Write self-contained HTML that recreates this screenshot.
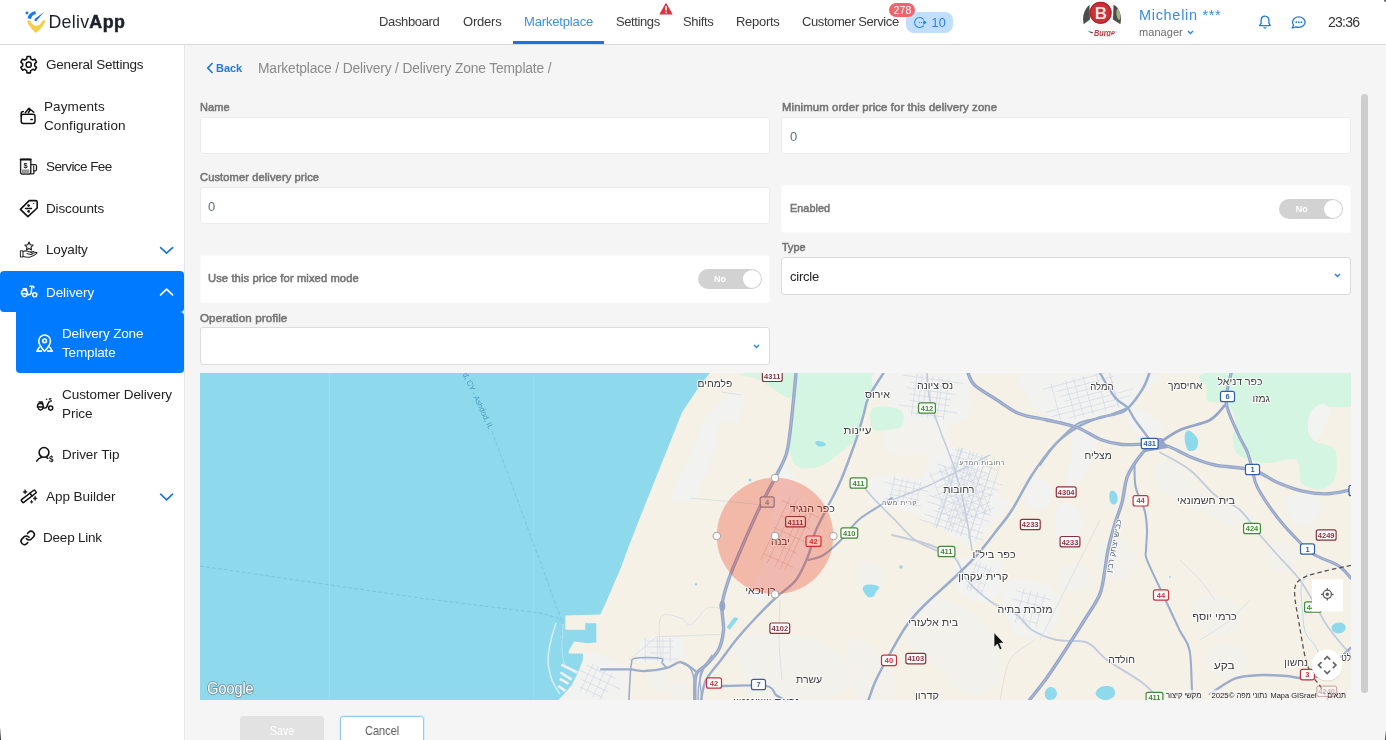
<!DOCTYPE html>
<html lang="en">
<head>
<meta charset="utf-8">
<title>DelivApp - Delivery Zone Template</title>
<style>
*{box-sizing:border-box;margin:0;padding:0}
html,body{width:1386px;height:740px;overflow:hidden;background:#f5f5f5;font-family:"Liberation Sans","Noto Sans CJK JP",sans-serif;color:#333}
.abs{position:absolute}
#header,#sideitems,#content{will-change:transform;-webkit-font-smoothing:antialiased}
#header{position:absolute;left:0;top:0;width:1386px;height:45px;background:#fff;border-bottom:1px solid #d9d9d9}
#sidebar{position:absolute;left:0;top:45px;width:185px;height:695px;background:#fff;border-right:1px solid #e6e6e6}
.nav{position:absolute;top:14px;font-size:13px;line-height:16px;color:#3a3a3a;white-space:nowrap;letter-spacing:.45px}
.nav.act{color:#3d8fe0}
.t{position:absolute;white-space:nowrap;transform-origin:0 50%}
.si{position:absolute;font-size:13.5px;line-height:19px;color:#222;white-space:nowrap;letter-spacing:.1px}
.lbl{transform-origin:0 50%;position:absolute;font-size:11.8px;line-height:14px;font-weight:normal;-webkit-text-stroke:.6px #767676;color:#767676;white-space:nowrap;letter-spacing:.1px}
.inp{position:absolute;background:#fff;border:1px solid #ececec;border-radius:3px}
.sel{position:absolute;background:#fff;border:1px solid #dcdcdc;border-radius:3px}
.val{position:absolute;font-size:13px;line-height:16px;color:#5f6f8a;white-space:nowrap}
.tog{position:absolute;width:64px;height:20px;border-radius:10px;background:#d2d2d2}
.tog i{position:absolute;right:1px;top:1px;width:18px;height:18px;border-radius:50%;background:#fff}
.tog span{position:absolute;left:16.5px;top:4.4px;font-size:9px;line-height:12px;font-weight:bold;color:#fff;font-style:normal}
svg{position:absolute;overflow:visible}
/*LS*/
#n1{letter-spacing:-0.36px!important}
#n2{letter-spacing:-0.21px!important}
#n3{letter-spacing:-0.16px!important}
#n4{letter-spacing:-0.40px!important}
#n5{letter-spacing:-0.36px!important}
#n6{letter-spacing:-0.30px!important}
#n7{letter-spacing:-0.41px!important}
#s1{letter-spacing:-0.20px!important}
#s2{letter-spacing:0.10px!important}
#s3{letter-spacing:-0.58px!important}
#s4{letter-spacing:-0.14px!important}
#s5{letter-spacing:-0.16px!important}
#s6{letter-spacing:-0.08px!important}
#s7{letter-spacing:-0.15px!important}
#s8{letter-spacing:-0.06px!important}
#s9{letter-spacing:-0.03px!important}
#s10{letter-spacing:-0.04px!important}
#s11{letter-spacing:-0.21px!important}
#u1{letter-spacing:0.69px!important}
#u2{letter-spacing:0.05px!important}
#u3{letter-spacing:-0.76px!important}
#c1{transform:scaleX(0.929)}
#c2{letter-spacing:-0.14px!important}
#l1{transform:scaleX(0.932)}
#l2{transform:scaleX(0.944)}
#l3{transform:scaleX(0.949)}
#l4{transform:scaleX(0.983)}
#l5{transform:scaleX(0.964)}
#l6{transform:scaleX(0.914)}
#l7{transform:scaleX(0.912)}
#v3{letter-spacing:-0.23px!important}
#b1{transform:scaleX(0.864)}
#b2{transform:scaleX(0.901)}
#lg1{letter-spacing:0.28px!important}
/*ENDLS*/
</style>
</head>
<body>
<!-- HEADER -->
<div id="header">
  <!-- logo -->
  <svg style="left:0;top:0" width="60" height="44" viewBox="0 0 60 44">
    <path d="M27.2 20 C27.5 25 32 29.6 36.1 33 C40.2 29.6 45 25 45.3 19.6 L41.6 21.4 C40.9 24 38.7 25.7 36.1 25.7 C33.4 25.7 31 23.7 30.6 21 Z" fill="#f6cf4a"/>
    <path d="M27.6 18.2 C28.4 14.4 31.4 11.7 35.3 11.2 L36 14 C33.5 14.4 31.6 16.2 31 18.9 Z" fill="#1877f2"/>
    <circle cx="27" cy="13" r="1.45" fill="#1877f2"/>
    <path d="M43.9 12.1 L36.4 20.9 Q35.2 21.8 34.5 20.6 Q34.2 19.7 35 18.8 Z" fill="#1877f2"/>
  </svg>
  <div class="t" id="lg1" style="left:48.4px;top:10.8px;font-size:17.8px;line-height:22px;color:#1c212c;letter-spacing:.2px">Deliv<b style="letter-spacing:.5px;-webkit-text-stroke:.55px #1c212c">App</b></div>

  <div class="nav" id="n1" style="left:379px">Dashboard</div>
  <div class="nav" id="n2" style="left:463px">Orders</div>
  <div class="nav act" id="n3" style="left:524px">Marketplace</div>
  <div class="abs" style="left:513px;top:41px;width:91px;height:3px;background:#1a73e0"></div>
  <div class="nav" id="n4" style="left:616px">Settings</div>
  <svg style="left:659px;top:2px" width="14" height="13" viewBox="0 0 14 13"><path d="M7 0.6 L13.4 12 Q13.6 12.6 13 12.6 L1 12.6 Q0.4 12.6 0.6 12 Z" fill="#d9343f"/><rect x="6.3" y="4" width="1.5" height="4.6" rx=".6" fill="#fff"/><circle cx="7.05" cy="10.4" r=".9" fill="#fff"/></svg>
  <div class="nav" id="n5" style="left:683px">Shifts</div>
  <div class="nav" id="n6" style="left:736px">Reports</div>
  <div class="nav" id="n7" style="left:802px">Customer Service</div>
  <!-- blue pill -->
  <div class="abs" style="left:906px;top:11.6px;width:47px;height:21px;border-radius:8px;background:#bfdffd"></div>
  <svg style="left:913px;top:15.5px" width="15" height="13" viewBox="0 0 15 13" fill="none" stroke="#2f86e6" stroke-width="1.05" stroke-linecap="round" stroke-linejoin="round"><path d="M10.4 3.2 A5 5 0 1 0 10.4 9.8"/><path d="M6.2 6.5 H10.5" stroke-dasharray=".4 1.7"/><path d="M10.8 4.9 L12.9 6.5 L10.8 8.1Z" fill="#2f86e6"/></svg>
  <div class="t" id="n8" style="left:931.4px;top:14.6px;font-size:12.6px;line-height:16px;color:#2f7fe0;letter-spacing:.3px">10</div>
  <!-- red badge -->
  <div class="abs" style="left:889.3px;top:3.4px;width:25.6px;height:13.4px;border-radius:7px;background:#f0656c"></div>
  <div class="t" id="n9" style="left:893.4px;top:4.2px;font-size:10.5px;line-height:12px;color:#fff;letter-spacing:.2px">278</div>

  <!-- avatar -->
  <svg style="left:1083px;top:0" width="38" height="38" viewBox="0 0 38 38">
    <defs><clipPath id="av"><circle cx="19" cy="19" r="19"/></clipPath></defs>
    <g clip-path="url(#av)">
      <rect width="38" height="38" fill="#fbfbfb"/>
      <path d="M6.5 5 L-2 8 L-2 25 L0.2 24.5 L7 19.5Z" fill="#4d4b4b"/>
      <path d="M30.5 5 L40 8 L40 25 L37.8 24.5 L30 19.5Z" fill="#4d4b4b"/>
      <ellipse cx="35.4" cy="14.4" rx="1.9" ry="5.6" transform="rotate(-8 35.4 14.4)" fill="#9db67d"/>
      <circle cx="17.6" cy="12.8" r="10.9" fill="#cf2f37"/>
      <circle cx="17.6" cy="12.8" r="10.4" fill="none" stroke="#a72229" stroke-width="1.1"/>
      <text x="18" y="19" text-anchor="middle" font-family="Liberation Sans,sans-serif" font-weight="bold" font-size="17" fill="#fbe3dc">B</text>
      <text x="21.6" y="35.6" text-anchor="middle" font-family="Liberation Sans,sans-serif" font-weight="bold" font-style="italic" font-size="9" fill="#c63a45" textLength="21" lengthAdjust="spacingAndGlyphs">Burge</text>
      <path d="M4.6 31 l4.2 2.6 l1.6 -1.4Z M38 30.6 l-4.6 2.6 l-1.2 -1.4Z" fill="#6b4a4a"/>
    </g>
  </svg>
  <div class="t" id="u1" style="left:1139px;top:5.7px;font-size:14.5px;line-height:18px;color:#3a8be2;letter-spacing:.9px">Michelin ***</div>
  <div class="t" id="u2" style="left:1139px;top:24.6px;font-size:11px;line-height:14px;color:#6b6b6b;letter-spacing:.75px">manager</div>
  <svg style="left:1187px;top:30px" width="7" height="5" viewBox="0 0 7 5" fill="none" stroke="#2f7fe0" stroke-width="1.4"><path d="M1 1 L3.5 3.6 L6 1"/></svg>
  <!-- bell -->
  <svg style="left:1258px;top:15px" width="14" height="15" viewBox="0 0 14 15" fill="none" stroke="#1f78e6" stroke-width="1.3" stroke-linejoin="round" stroke-linecap="round"><path d="M7 1.2 C4.4 1.2 3.1 3.2 3.1 5.4 V8.2 L1.7 10.6 H12.3 L10.9 8.2 V5.4 C10.9 3.2 9.6 1.2 7 1.2Z"/><path d="M6 12.6 Q7 13.6 8 12.6"/></svg>
  <!-- chat -->
  <svg style="left:1291px;top:16px" width="15" height="13" viewBox="0 0 15 13" fill="none" stroke="#1f78e6" stroke-width="1.3" stroke-linejoin="round"><path d="M7.8 0.9 C11.3 0.9 14.1 3.2 14.1 6.1 C14.1 9 11.3 11.3 7.8 11.3 C6.8 11.3 5.9 11.1 5.1 10.8 L1.2 12 L2.6 9.2 C1.9 8.3 1.5 7.2 1.5 6.1 C1.5 3.2 4.3 0.9 7.8 0.9Z"/><g fill="#1f78e6" stroke="none"><circle cx="5.3" cy="6.2" r=".9"/><circle cx="7.9" cy="6.2" r=".9"/><circle cx="10.5" cy="6.2" r=".9"/></g></svg>
  <div class="t" id="u3" style="left:1328px;top:13.6px;font-size:14px;line-height:17px;color:#333;letter-spacing:.2px">23:36</div>
</div>

<!-- SIDEBAR -->
<div id="sidebar"></div>
<div id="sideitems">
  <div class="abs" style="left:0;top:271px;width:184px;height:41px;background:#007bff;border-radius:4px 4px 4px 4px"></div>
  <div class="abs" style="left:16.4px;top:312px;width:167.6px;height:61px;background:#007bff;border-radius:0 4px 4px 4px"></div><div class="abs" style="left:16.4px;top:306px;width:120px;height:10px;background:#007bff"></div>
  <div class="si" id="s1" style="left:46px;top:55px">General Settings</div>
  <div class="si" id="s2" style="left:44px;top:97px">Payments<br>Configuration</div>
  <div class="si" id="s3" style="left:46px;top:157px">Service Fee</div>
  <div class="si" id="s4" style="left:46px;top:199px">Discounts</div>
  <div class="si" id="s5" style="left:46px;top:240px">Loyalty</div>
  <div class="si" id="s6" style="left:46px;top:282.7px;color:#fff">Delivery</div>
  <div class="si" id="s7" style="left:62px;top:324px;color:#fff">Delivery Zone<br>Template</div>
  <div class="si" id="s8" style="left:62px;top:385px">Customer Delivery<br>Price</div>
  <div class="si" id="s9" style="left:62px;top:445px">Driver Tip</div>
  <div class="si" id="s10" style="left:46px;top:487px">App Builder</div>
  <div class="si" id="s11" style="left:43px;top:528px">Deep Link</div>
  <!--ICONS-->
<svg style="left:0;top:0" width="186" height="740" viewBox="0 0 186 740" fill="none" stroke="#111" stroke-width="1.5" stroke-linecap="round" stroke-linejoin="round">
<path d="M26.69 58.83 L27.05 56.57 L30.35 56.57 L30.71 58.83 L32.78 60.03 L34.92 59.20 L36.57 62.06 L34.78 63.51 L34.78 65.89 L36.57 67.34 L34.92 70.20 L32.78 69.37 L30.71 70.57 L30.35 72.83 L27.05 72.83 L26.69 70.57 L24.62 69.37 L22.48 70.20 L20.83 67.34 L22.62 65.89 L22.62 63.51 L20.83 62.06 L22.48 59.20 L24.62 60.03Z" stroke-width="1.6"/><circle cx="28.7" cy="64.7" r="2.6" stroke-width="1.5"/>
<rect x="21.2" y="114.3" width="13.8" height="9.1" rx="2.2"/>
<path d="M21.2 116 V113.6 Q21.2 111.7 23.3 111.6"/><path d="M25.4 112.5 L29 108.2 L33.8 112.3"/><path d="M30.3 109.8 L28.4 112.5"/>
<path d="M31 119.5 h1.2" stroke-width="1.7"/>
<rect x="20.6" y="159.4" width="10.2" height="14.6" rx="1.4" stroke="#222" stroke-width="1.4"/>
<rect x="22" y="169.4" width="7.4" height="4" fill="#9a9a9a" stroke="none"/>
<path d="M20.6 159.6 h10.2" stroke-width="2"/>
<path d="M30.9 164.7 h4.2 q1.4 0 1.4 1.4 v3.4 q0 1.4 -1.4 1.4 h-1.2 v2 q0 1 -1 1 h-2" stroke="#222" stroke-width="1.3"/><path d="M33.7 166 v4.6" stroke="#222" stroke-width="1.1"/>
<text x="25.6" y="167.8" text-anchor="middle" font-family="Liberation Sans,sans-serif" font-size="7.5" font-weight="bold" fill="#111" stroke="none">$</text>
<path d="M20.4 209.4 L29.2 200.6 H35.6 Q37.2 200.6 37.2 202.2 V208 L27.9 216.6 Z" stroke-width="1.6"/>
<circle cx="28.6" cy="205.6" r="1.3" fill="#111" stroke="none"/><circle cx="28.6" cy="211.4" r="1.3" fill="#111" stroke="none"/><path d="M25.4 208.5 H31.6" stroke-width="1.3"/><circle cx="33.7" cy="203.6" r=".6" fill="#111" stroke="none"/>
<path d="M29.00 242.10 L30.23 244.70 L33.09 245.07 L31.00 247.05 L31.53 249.88 L29.00 248.50 L26.47 249.88 L27.00 247.05 L24.91 245.07 L27.77 244.70Z" stroke="#222" stroke-width="1.15"/>
<g stroke="#2a2a2a" stroke-width="1.05"><rect x="20.4" y="250.8" width="2.6" height="6.2" rx=".5"/><path d="M23 251.6 Q25.5 250.4 27.5 251.2 L31.5 252.6 Q32.8 253.2 32 254.2 Q31.5 254.8 30.2 254.5 L27 253.6"/><path d="M23 256.3 Q26 257.6 29.5 257.2 Q33.5 256.3 36.8 253.4 Q37.3 252.4 36 252.3 L32.3 253.6"/><path d="M30.5 252 L34 251.4"/></g>
<g transform="translate(0 0)" stroke="#fff" stroke-width="1.45"><circle cx="34.7" cy="294.8" r="2.05"/><path d="M30 286.3 H33 Q33.9 286.4 33.9 287.7"/><path d="M31.9 286.5 L31.3 292"/><path d="M31.4 291.8 Q31.3 294.8 28.6 294.8 H27.4"/><path d="M21.5 293.7 Q21.3 290.2 24.4 290 Q27.1 290 27.5 293.7"/><path d="M21.5 293.7 H27.5"/><path d="M23.1 288.6 H26.2 L26.7 290.4"/><path d="M22.3 294.9 A2.3 2.3 0 0 0 26.8 294.9"/></g>
<g transform="translate(16.0 113.3)" stroke="#111" stroke-width="1.45"><circle cx="34.7" cy="294.8" r="2.05"/><path d="M33.1 288.6 L31.9 290.6 L31.5 292.2"/><path d="M31.4 291.8 Q31.3 294.8 28.6 294.8 H27.4"/><path d="M21.5 293.7 Q21.3 290.2 24.4 290 Q27.1 290 27.5 293.7"/><path d="M21.5 293.7 H27.5"/><path d="M23.1 288.6 H26.2 L26.7 290.4"/><path d="M22.3 294.9 A2.3 2.3 0 0 0 26.8 294.9"/><circle cx="30.6" cy="286" r=".8" fill="#111" stroke="none"/><text x="34.2" y="289.2" text-anchor="middle" font-family="Liberation Sans,sans-serif" font-size="6.2" font-weight="bold" fill="#111" stroke="none">$</text></g>
<g stroke="#fff" stroke-width="1.55"><path d="M44.6 351.2 C41.5 348 38.7 344.6 38.7 340.9 A5.9 5.9 0 0 1 50.5 340.9 C50.5 344.6 47.7 348 44.6 351.2Z"/><circle cx="44.6" cy="340.8" r="1.9"/><path d="M39.3 347.3 L36.8 351.1 H41.6"/><path d="M49.9 347.3 L52.4 351.1 H47.6"/></g>
<circle cx="44" cy="452.4" r="4.9" stroke-width="1.55"/><path d="M36.7 461.2 Q38.4 458.3 41.2 457.6 M46.8 457.6 L47.8 458.3" stroke-width="1.55"/>
<text x="51.4" y="462.2" text-anchor="middle" font-family="Liberation Sans,sans-serif" font-size="8.2" font-weight="bold" fill="#111" stroke="none">$</text>
<g transform="rotate(-38 28.7 496.3)" stroke-width="1.5"><rect x="20.2" y="494.6" width="17" height="3.5" rx=".8"/><path d="M31.6 494.6 v3.5"/></g>
<path d="M25.1 489.7 L25.716 491.284 L27.3 491.9 L25.716 492.51599999999996 L25.1 494.09999999999997 L24.484 492.51599999999996 L22.900000000000002 491.9 L24.484 491.284Z" fill="#111" stroke="#111" stroke-width=".5"/>
<path d="M35.1 496.2 L35.716 497.784 L37.300000000000004 498.4 L35.716 499.01599999999996 L35.1 500.59999999999997 L34.484 499.01599999999996 L32.9 498.4 L34.484 497.784Z" fill="#111" stroke="#111" stroke-width=".5"/>
<path d="M31.6 500.4 L32.02 501.47999999999996 L33.1 501.9 L32.02 502.32 L31.6 503.4 L31.18 502.32 L30.1 501.9 L31.18 501.47999999999996Z" fill="#111" stroke="#111" stroke-width=".5"/>
<g transform="translate(19.7 529.9) scale(.667)" stroke-width="2.3"><path d="M10 13a5 5 0 0 0 7.54.54l3-3a5 5 0 0 0-7.07-7.07l-1.72 1.71"/><path d="M14 11a5 5 0 0 0-7.54-.54l-3 3a5 5 0 0 0 7.07 7.07l1.71-1.71"/></g>
<path d="M160.6 247.6 L166.6 253.2 L172.6 247.6" stroke="#1a6fe0" stroke-width="1.6"/>
<path d="M160.6 494.2 L166.6 499.8 L172.6 494.2" stroke="#1a6fe0" stroke-width="1.6"/>
<path d="M160.6 294.8 L166.6 289.2 L172.6 294.8" stroke="#fff" stroke-width="1.7"/>
</svg>
<!--ENDICONS-->
</div>

<!-- CONTENT -->
<div id="content">
  <svg style="left:206.3px;top:62px" width="8" height="12" viewBox="0 0 8 12" fill="none" stroke="#1f78e6" stroke-width="1.7"><path d="M6.5 1 L1.8 6 L6.5 11"/></svg>
  <div class="t" id="c1" style="left:216px;top:60px;font-size:11.8px;line-height:16px;font-weight:bold;color:#1f78e6">Back</div>
  <div class="t" id="c2" style="left:258px;top:60px;font-size:13.8px;line-height:17px;color:#8a8a8a">Marketplace / Delivery / Delivery Zone Template /</div>

  <div class="lbl" id="l1" style="left:200px;top:100px">Name</div>
  <div class="inp" style="left:200px;top:117px;width:570px;height:37px"></div>
  <div class="lbl" id="l2" style="left:200px;top:170px">Customer delivery price</div>
  <div class="inp" style="left:200px;top:187px;width:570px;height:37px"></div>
  <div class="val" style="left:208px;top:198.7px">0</div>
  <div class="inp" style="left:200px;top:255px;width:570px;height:48px;border-color:#fafafa"></div>
  <div class="lbl" id="l3" style="left:208px;top:271px">Use this price for mixed mode</div>
  <div class="tog" style="left:697.6px;top:269px"><span>No</span><i></i></div>
  <div class="lbl" id="l4" style="left:200px;top:311px">Operation profile</div>
  <div class="sel" style="left:200px;top:327px;width:570px;height:38px"></div>
  <svg style="left:753px;top:344px" width="7" height="5" viewBox="0 0 7 5" fill="none" stroke="#2f7fe0" stroke-width="1.4"><path d="M1 1 L3.5 3.6 L6 1"/></svg>

  <div class="lbl" id="l5" style="left:782px;top:100px">Minimum order price for this delivery zone</div>
  <div class="inp" style="left:781px;top:117px;width:570px;height:37px"></div>
  <div class="val" style="left:790px;top:128.7px">0</div>
  <div class="inp" style="left:781px;top:185px;width:570px;height:48px;border-color:#fafafa"></div>
  <div class="lbl" id="l6" style="left:790px;top:201px">Enabled</div>
  <div class="tog" style="left:1279.3px;top:198.5px"><span>No</span><i></i></div>
  <div class="lbl" id="l7" style="left:782px;top:240px">Type</div>
  <div class="sel" style="left:781px;top:257px;width:570px;height:38px"></div>
  <div class="val" id="v3" style="left:790px;top:268.7px;color:#222">circle</div>
  <svg style="left:1334px;top:273px" width="7" height="5" viewBox="0 0 7 5" fill="none" stroke="#2f7fe0" stroke-width="1.4"><path d="M1 1 L3.5 3.6 L6 1"/></svg>

  <!-- scrollbar -->
  <div class="abs" style="left:1361px;top:94px;width:7px;height:599px;border-radius:4px;background:#cdcdcd"></div>

  <!-- buttons -->
  <div class="abs" style="left:240px;top:716px;width:84px;height:30px;border-radius:3px;background:#e2e2e2"></div>
  <div class="t" id="b1" style="left:269.5px;top:723px;font-size:12.2px;line-height:16px;color:#fff">Save</div>
  <div class="abs" style="left:340px;top:716px;width:84px;height:30px;border-radius:3px;background:#fff;border:1px solid #8fcdf5;box-shadow:0 0 0 1px #d8eefc"></div>
  <div class="t" id="b2" style="left:364.5px;top:723px;font-size:12.2px;line-height:16px;color:#5a5a5a">Cancel</div>

  <!--MAP-->
<svg id="map" style="left:200px;top:373px" width="1151" height="327" viewBox="200 373 1151 327">
<defs><clipPath id="mc"><rect x="200" y="373" width="1151" height="327"/></clipPath></defs>
<g clip-path="url(#mc)" font-family="Liberation Sans,DejaVu Sans,sans-serif">
<rect x="200" y="373" width="1151" height="327" fill="#f6f1e6"/>
<path d="M751.0 373.0 C779.9 371.4 855.8 368.6 884.0 373.0 C912.2 377.4 876.2 383.8 872.0 392.0 C867.8 400.2 868.3 400.5 866.0 408.0 C863.7 415.5 864.3 417.0 862.0 424.0 C859.7 431.0 859.7 432.4 856.0 438.0 C852.3 443.6 853.1 442.1 846.0 448.0 C838.9 453.9 833.7 458.8 825.5 463.5 C817.3 468.2 817.6 467.4 811.0 468.0 C804.4 468.6 801.8 469.0 797.0 466.0 C792.2 463.0 792.4 461.1 790.5 455.0 C788.6 448.9 788.6 448.2 789.0 440.0 C789.4 431.8 790.8 429.3 792.0 420.0 C793.2 410.7 795.4 405.4 794.0 400.0 C792.6 394.6 791.1 399.8 786.0 397.0 C780.9 394.2 778.1 392.0 772.0 388.0 C765.9 384.0 764.9 383.5 760.0 380.0 C755.1 376.5 722.1 374.6 751.0 373.0Z" fill="#d4f5e1"/>
<path d="M1209.0 373.0 C1230.7 370.8 1330.0 368.2 1351.4 373.0 C1372.8 377.8 1356.0 400.0 1351.4 405.1 C1346.8 410.2 1326.8 404.8 1320.6 406.9 C1314.4 409.0 1311.0 414.2 1310.0 419.2 C1309.0 424.2 1310.7 436.3 1313.6 440.3 C1316.5 444.3 1326.0 443.5 1329.4 445.6 C1332.8 447.7 1335.6 449.4 1336.4 454.4 C1337.2 459.4 1337.1 473.7 1334.7 479.0 C1332.3 484.3 1325.6 489.0 1320.6 489.5 C1315.6 490.0 1305.0 487.0 1301.3 482.5 C1297.6 478.0 1301.5 462.5 1296.0 459.6 C1290.5 456.7 1273.1 463.9 1264.4 463.1 C1255.7 462.3 1242.8 458.3 1238.0 454.4 C1233.2 450.5 1233.0 441.6 1232.7 436.8 C1232.4 432.0 1237.0 427.7 1236.2 422.7 C1235.4 417.7 1231.7 406.6 1227.5 403.4 C1223.3 400.2 1211.1 404.0 1208.0 401.6 C1204.9 399.2 1206.8 391.9 1207.0 387.6 C1207.2 383.3 1187.3 375.2 1209.0 373.0Z" fill="#d4f5e1"/>
<path d="M1311.0 412.0 C1313.8 408.0 1318.2 404.4 1322.0 404.0 C1325.8 403.6 1329.2 406.0 1330.0 410.0 C1330.8 414.0 1328.4 418.0 1326.0 424.0 C1323.6 430.0 1321.2 437.6 1318.0 440.0 C1314.8 442.4 1312.0 439.2 1310.0 436.0 C1308.0 432.8 1307.8 428.8 1308.0 424.0 C1308.2 419.2 1308.2 416.0 1311.0 412.0Z" fill="#f3f3f1"/>
<path d="M721.1 402.5 C723.1 400.6 727.1 395.1 729.8 393.8 C732.5 392.5 742.5 390.5 744.1 391.4 C745.7 392.3 744.0 398.1 743.3 401.7 C742.6 405.3 740.6 420.0 737.8 422.4 C735.0 424.8 721.8 419.6 719.5 422.4 C717.2 425.2 718.7 442.5 717.9 446.2 C717.1 449.9 713.6 451.1 712.4 454.1 C711.2 457.1 709.0 468.0 707.6 471.6 C706.2 475.2 702.1 481.7 700.5 485.0 C698.9 488.3 697.3 498.2 694.0 500.0 C690.7 501.8 674.0 501.8 672.0 500.0 C670.0 498.2 674.2 490.9 676.7 485.0 C679.2 479.1 690.2 456.7 693.3 449.4 C696.4 442.1 700.7 427.0 702.9 422.4 C705.1 417.8 710.3 412.0 712.4 409.7 C714.5 407.4 719.1 404.4 721.1 402.5Z" fill="#f2f2f1"/>
<path d="M778.0 470.0 C782.7 458.8 787.3 467.3 792.0 472.0 C796.7 476.7 793.3 482.3 798.0 490.0 C802.7 497.7 807.3 495.7 812.0 505.0 C816.7 514.3 819.4 517.2 818.0 530.0 C816.6 542.8 812.5 547.2 806.0 560.0 C799.5 572.8 797.9 576.4 790.0 585.0 C782.1 593.6 779.5 593.5 772.0 597.0 C764.5 600.5 762.7 601.6 758.0 600.0 C753.3 598.4 750.4 599.3 752.0 590.0 C753.6 580.7 760.3 576.3 765.0 560.0 C769.7 543.7 769.0 541.0 772.0 520.0 C775.0 499.0 773.3 481.2 778.0 470.0Z" fill="#f2f2f1" opacity="1"/>
<path d="M874.0 373.0 C879.0 369.5 900.7 369.5 906.0 373.0 C911.3 376.5 908.3 389.2 906.0 394.0 C903.7 398.8 897.0 402.0 892.0 402.0 C887.0 402.0 879.0 398.8 876.0 394.0 C873.0 389.2 869.0 376.5 874.0 373.0Z" fill="#f2f2f1" opacity="1"/>
<path d="M895.6 373.0 C907.2 369.2 956.4 369.7 967.4 373.0 C978.4 376.3 969.0 388.5 969.0 395.0 C969.0 401.5 970.7 411.5 967.4 416.2 C964.1 420.9 954.0 425.2 946.9 426.4 C939.8 427.6 927.7 424.8 920.0 424.0 C912.3 423.2 900.1 425.2 895.6 421.3 C891.1 417.4 890.0 405.2 890.0 398.0 C890.0 390.8 884.0 376.8 895.6 373.0Z" fill="#f2f2f1" opacity="1"/>
<path d="M931.5 454.6 C935.3 450.0 940.0 446.9 946.9 446.9 C953.8 446.9 971.2 450.7 977.7 454.6 C984.2 458.5 987.4 466.8 990.5 472.6 C993.6 478.4 995.5 488.5 998.2 493.1 C1000.9 497.7 1008.5 499.5 1008.5 503.3 C1008.5 507.1 1002.1 514.1 998.2 518.7 C994.3 523.3 986.6 529.9 982.8 534.1 C979.0 538.3 976.8 546.5 972.6 546.9 C968.4 547.3 960.4 540.2 954.6 536.7 C948.8 533.2 939.9 527.3 934.1 523.8 C928.3 520.3 922.0 515.9 916.2 513.6 C910.4 511.3 902.2 510.0 895.6 508.5 C889.0 507.0 875.5 507.7 872.0 503.3 C868.5 498.9 868.5 483.2 872.0 479.0 C875.5 474.8 888.2 475.3 895.6 475.1 C903.0 474.9 915.9 480.8 921.3 477.7 C926.7 474.6 927.7 459.2 931.5 454.6Z" fill="#f2f2f1" opacity="1"/>
<path d="M887.0 424.0 C891.7 418.9 905.0 421.5 915.0 421.3 C925.0 421.1 941.6 417.9 946.9 423.0 C952.2 428.1 952.2 446.7 946.9 452.0 C941.6 457.3 925.0 455.0 915.0 455.0 C905.0 455.0 891.7 457.2 887.0 452.0 C882.3 446.8 882.3 429.1 887.0 424.0Z" fill="#f4f2ed" opacity="1"/>
<path d="M872.0 409.0 C875.0 405.5 884.8 406.3 890.0 407.0 C895.2 407.7 901.2 409.7 903.0 413.0 C904.8 416.3 904.2 424.2 901.0 427.0 C897.8 429.8 888.8 429.8 884.0 430.0 C879.2 430.2 874.0 431.5 872.0 428.0 C870.0 424.5 869.0 412.5 872.0 409.0Z" fill="#d4f5e1"/>
<path d="M1030.0 373.0 C1058.0 367.2 1124.3 367.9 1150.0 373.0 C1175.7 378.1 1145.1 386.4 1140.0 395.0 C1134.9 403.6 1137.3 404.2 1128.0 410.0 C1118.7 415.8 1113.5 416.7 1100.0 420.0 C1086.5 423.3 1082.8 425.2 1070.0 424.0 C1057.2 422.8 1054.3 421.1 1045.0 415.0 C1035.7 408.9 1033.5 407.8 1030.0 398.0 C1026.5 388.2 1002.0 378.8 1030.0 373.0Z" fill="#f2f2f1" opacity="1"/>
<path d="M1125.0 408.0 C1128.5 404.0 1141.4 410.3 1150.0 415.0 C1158.6 419.7 1162.0 422.6 1162.0 428.0 C1162.0 433.4 1156.3 437.1 1150.0 438.0 C1143.7 438.9 1140.8 439.0 1135.0 432.0 C1129.2 425.0 1121.5 412.0 1125.0 408.0Z" fill="#f2f2f1" opacity="1"/>
<path d="M1075.0 428.0 C1080.4 424.5 1091.5 431.4 1095.0 440.0 C1098.5 448.6 1094.7 454.5 1090.0 465.0 C1085.3 475.5 1080.6 482.0 1075.0 485.0 C1069.4 488.0 1066.7 485.0 1066.0 478.0 C1065.3 471.0 1069.9 466.7 1072.0 455.0 C1074.1 443.3 1069.6 431.5 1075.0 428.0Z" fill="#f2f2f1" opacity="1"/>
<path d="M1030.0 478.0 C1035.8 475.7 1045.8 478.7 1050.0 485.0 C1054.2 491.3 1052.2 499.6 1048.0 505.0 C1043.8 510.4 1037.4 510.3 1032.0 508.0 C1026.6 505.7 1025.5 502.0 1025.0 495.0 C1024.5 488.0 1024.2 480.3 1030.0 478.0Z" fill="#f2f2f1" opacity="1"/>
<path d="M1060.0 505.0 C1065.4 500.3 1073.3 503.0 1078.0 510.0 C1082.7 517.0 1082.8 526.8 1080.0 535.0 C1077.2 543.2 1071.8 546.2 1066.0 545.0 C1060.2 543.8 1056.4 539.3 1055.0 530.0 C1053.6 520.7 1054.6 509.7 1060.0 505.0Z" fill="#f2f2f1" opacity="1"/>
<path d="M960.0 560.0 C969.3 554.9 985.0 553.3 995.0 558.0 C1005.0 562.7 1003.7 570.2 1003.0 580.0 C1002.3 589.8 1000.2 595.8 992.0 600.0 C983.8 604.2 976.6 602.7 968.0 598.0 C959.4 593.3 956.9 588.9 955.0 580.0 C953.1 571.1 950.7 565.1 960.0 560.0Z" fill="#f2f2f1" opacity="1"/>
<path d="M1005.0 585.0 C1012.5 576.1 1027.6 578.5 1040.0 582.0 C1052.4 585.5 1055.2 588.8 1058.0 600.0 C1060.8 611.2 1059.7 621.6 1052.0 630.0 C1044.3 638.4 1035.3 638.3 1025.0 636.0 C1014.7 633.7 1012.7 631.9 1008.0 620.0 C1003.3 608.1 997.5 593.9 1005.0 585.0Z" fill="#f2f2f1" opacity="1"/>
<path d="M925.0 598.0 C937.8 593.3 946.0 598.7 960.0 605.0 C974.0 611.3 975.2 612.2 985.0 625.0 C994.8 637.8 1000.8 644.8 1002.0 660.0 C1003.2 675.2 999.8 682.5 990.0 690.0 C980.2 697.5 971.7 696.7 960.0 692.0 C948.3 687.3 950.5 679.8 940.0 670.0 C929.5 660.2 923.2 660.5 915.0 650.0 C906.8 639.5 902.7 637.1 905.0 625.0 C907.3 612.9 912.2 602.7 925.0 598.0Z" fill="#f3f1ec" opacity="1"/>
<path d="M582.9 653.5 L600.0 653.5 L629.0 669.0 L625.7 700.0 L559.0 700.0 L561.4 663.0 L575.0 660.0Z" fill="#f2f2f1"/>
<path d="M645.0 637.6 L682.9 637.6 L682.9 655.0 L672.0 663.0 L638.4 663.0 L638.4 644.0Z" fill="#f2f2f1"/>
<path d="M651.0 672.0 C654.0 667.3 662.3 666.8 666.0 671.0 C669.7 675.2 670.0 685.3 667.0 690.0 C664.0 694.7 656.7 695.2 653.0 691.0 C649.3 686.8 648.0 676.7 651.0 672.0Z" fill="#f3f1ec" opacity="1"/>
<path d="M672.0 685.0 C675.5 681.3 682.3 680.5 686.0 684.0 C689.7 687.5 691.5 696.3 688.0 700.0 C684.5 703.7 674.7 703.5 671.0 700.0 C667.3 696.5 668.5 688.7 672.0 685.0Z" fill="#f3f1ec" opacity="1"/>
<path d="M740.0 640.0 C750.5 630.7 769.0 633.1 790.0 635.0 C811.0 636.9 816.0 637.5 830.0 648.0 C844.0 658.5 852.3 667.9 850.0 680.0 C847.7 692.1 841.0 695.3 820.0 700.0 C799.0 704.7 777.5 705.8 760.0 700.0 C742.5 694.2 749.7 689.0 745.0 675.0 C740.3 661.0 729.5 649.3 740.0 640.0Z" fill="#f3f1ec" opacity="1"/>
<path d="M850.0 640.0 C855.8 630.7 875.2 646.0 885.0 660.0 C894.8 674.0 897.8 690.7 892.0 700.0 C886.2 709.3 869.8 714.0 860.0 700.0 C850.2 686.0 844.2 649.3 850.0 640.0Z" fill="#f3f1ec" opacity="1"/>
<path d="M868.0 560.0 C874.1 560.0 881.7 564.5 884.0 572.0 C886.3 579.5 883.1 587.8 878.0 592.0 C872.9 596.2 866.7 594.7 862.0 590.0 C857.3 585.3 856.6 579.0 858.0 572.0 C859.4 565.0 861.9 560.0 868.0 560.0Z" fill="#f3f1ec" opacity="1"/>
<path d="M1160.0 462.0 C1166.3 458.5 1175.7 463.0 1185.0 470.0 C1194.3 477.0 1188.3 483.8 1200.0 492.0 C1211.7 500.2 1222.2 498.5 1235.0 505.0 C1247.8 511.5 1253.8 514.6 1255.0 520.0 C1256.2 525.4 1250.5 529.2 1240.0 528.0 C1229.5 526.8 1224.0 521.5 1210.0 515.0 C1196.0 508.5 1192.1 507.0 1180.0 500.0 C1167.9 493.0 1162.7 493.9 1158.0 485.0 C1153.3 476.1 1153.7 465.5 1160.0 462.0Z" fill="#f3f1ec" opacity="1"/>
<path d="M1290.0 495.0 C1297.0 491.7 1312.2 492.2 1318.0 498.0 C1323.8 503.8 1319.2 513.7 1315.0 520.0 C1310.8 526.3 1306.3 526.9 1300.0 525.0 C1293.7 523.1 1290.3 519.0 1288.0 512.0 C1285.7 505.0 1283.0 498.3 1290.0 495.0Z" fill="#f2f2f1" opacity="1"/>
<path d="M1195.0 600.0 C1199.7 592.5 1214.5 594.5 1225.0 598.0 C1235.5 601.5 1239.3 606.4 1240.0 615.0 C1240.7 623.6 1236.2 631.5 1228.0 635.0 C1219.8 638.5 1212.7 638.2 1205.0 630.0 C1197.3 621.8 1190.3 607.5 1195.0 600.0Z" fill="#f3f1ec" opacity="1"/>
<path d="M1100.0 545.0 C1105.8 538.0 1116.8 536.5 1125.0 540.0 C1133.2 543.5 1136.2 550.7 1135.0 560.0 C1133.8 569.3 1128.2 577.7 1120.0 580.0 C1111.8 582.3 1104.7 578.2 1100.0 570.0 C1095.3 561.8 1094.2 552.0 1100.0 545.0Z" fill="#f3f1ec" opacity="1"/>
<path d="M1270.0 545.0 C1275.4 540.3 1290.3 542.2 1295.0 548.0 C1299.7 553.8 1295.4 565.3 1290.0 570.0 C1284.6 574.7 1276.7 573.8 1272.0 568.0 C1267.3 562.2 1264.6 549.7 1270.0 545.0Z" fill="#f3f1ec" opacity="1"/>
<path d="M1208.0 650.0 C1213.8 643.5 1231.4 642.9 1240.0 648.0 C1248.6 653.1 1250.8 665.5 1245.0 672.0 C1239.2 678.5 1223.6 681.1 1215.0 676.0 C1206.4 670.9 1202.2 656.5 1208.0 650.0Z" fill="#f3f1ec" opacity="1"/>
<path d="M1060.0 570.0 C1064.7 564.4 1078.0 562.5 1085.0 566.0 C1092.0 569.5 1094.7 579.4 1090.0 585.0 C1085.3 590.6 1072.0 593.5 1065.0 590.0 C1058.0 586.5 1055.3 575.6 1060.0 570.0Z" fill="#f3f1ec" opacity="1"/>
<path d="M954.8 449.3L997.1 463.0M959.5 447.4L933.6 527.3M950.1 454.5L997.9 470.0M961.8 448.1L935.8 528.0M953.7 462.5L990.2 474.4M962.2 448.3L936.3 528.1M937.2 463.9L1002.8 485.2M962.8 448.4L936.8 528.3M937.8 470.9L998.2 490.5M970.5 451.0L944.6 530.9M939.7 478.3L992.3 495.4M973.6 452.0L947.7 531.9M943.9 486.5L984.1 499.5M977.0 453.1L951.0 532.9M941.2 492.4L982.8 505.9M982.1 454.7L956.1 534.6M928.7 495.1L991.3 515.5M986.5 456.1L960.5 536.0M927.2 501.4L988.8 521.5M986.4 456.1L960.5 536.0M933.6 510.3L978.4 524.9M994.1 458.6L968.2 538.5M924.4 514.1L983.7 533.4M1001.4 461.0L975.4 540.9M919.8 519.4L984.2 540.3M994.2 458.6L968.2 538.5" stroke="#cdd5e2" stroke-width=".6" fill="none"/>
<path d="M929.7 476.3L974.3 458.3M930.1 472.5L952.6 528.2M933.6 481.9L975.5 465.0M939.8 468.6L962.3 524.2M936.5 487.9L977.5 471.4M944.0 466.9L966.5 522.5M932.6 496.7L986.4 474.9M945.0 466.5L967.5 522.1M940.5 500.7L983.5 483.3M950.8 464.2L973.2 519.8M937.9 508.9L991.0 487.5M955.6 462.2L978.1 517.9M940.8 514.9L993.2 493.8M962.2 459.6L984.7 515.2M948.5 519.0L990.5 502.1M963.9 458.9L986.3 514.5M949.8 525.7L994.2 507.7M968.5 457.0L990.9 512.7" stroke="#cdd5e2" stroke-width=".6" fill="none"/>
<path d="M893.0 478.8L921.4 484.8M894.9 476.6L889.5 502.0M883.9 482.2L928.2 491.6M902.6 478.2L897.2 503.6M892.2 489.3L917.8 494.7M907.7 479.3L902.3 504.7M888.3 493.8L919.6 500.4M915.2 480.9L909.8 506.3M884.8 498.3L920.8 506.0M920.8 482.1L915.4 507.5" stroke="#cdd5e2" stroke-width=".6" fill="none"/>
<path d="M901.8 374.9L963.2 383.5M917.2 374.0L911.3 415.6M910.0 382.1L953.4 388.2M922.4 374.7L916.5 416.3M905.8 387.5L955.9 394.6M927.3 375.4L921.5 417.0M909.2 394.1L950.8 399.9M932.9 376.2L927.1 417.8M908.9 400.1L949.4 405.8M939.8 377.2L933.9 418.8M899.1 404.8L957.6 413.0M942.6 377.6L936.7 419.2M911.2 412.5L943.8 417.1M949.1 378.5L943.2 420.1" stroke="#cdd5e2" stroke-width=".6" fill="none"/>
<path d="M1043.1 389.3L1124.1 367.6M1051.1 384.2L1061.4 422.8M1056.7 391.6L1113.4 376.4M1065.4 380.4L1075.7 419.0M1059.5 396.7L1113.5 382.2M1073.3 378.2L1083.6 416.9M1064.1 401.4L1111.9 388.6M1082.8 375.7L1093.2 414.3M1046.0 412.2L1133.0 388.9M1095.6 372.2L1106.0 410.9M1051.2 416.7L1130.8 395.4M1108.5 368.8L1118.9 407.4M1069.1 417.8L1115.8 405.3M1108.2 368.9L1118.5 407.5" stroke="#cdd5e2" stroke-width=".6" fill="none"/>
<path d="M781.8 500.3L821.9 519.0M790.3 496.5L760.7 560.0M781.5 515.6L810.3 529.0M796.9 499.6L767.3 563.0M773.5 527.3L806.5 542.7M804.8 503.3L775.2 566.7M770.9 541.5L797.3 553.8M809.7 505.5L780.1 569.0M763.4 553.5L792.9 567.2M814.1 507.6L784.5 571.0" stroke="#dcc0b8" stroke-width=".6" fill="none"/>
<path d="M646.2 641.0L673.8 641.0M645.3 638.0L645.3 662.0M646.7 647.0L673.3 647.0M657.5 638.0L657.5 662.0M649.6 653.0L670.4 653.0M662.9 638.0L662.9 662.0M642.2 659.0L677.8 659.0M670.2 638.0L670.2 662.0" stroke="#cdd5e2" stroke-width=".6" fill="none"/>
<path d="M586.1 665.0L615.4 678.6M593.0 664.1L580.3 691.2M575.1 668.1L620.0 689.1M598.3 666.5L585.6 693.7M580.7 679.0L608.1 691.8M605.3 669.8L592.7 697.0M579.3 686.6L603.2 697.8M612.3 673.0L599.6 700.2" stroke="#cdd5e2" stroke-width=".6" fill="none"/>
<path d="M970.0 563.1L993.7 571.7M977.1 561.7L966.8 589.9M971.9 571.8L986.6 577.1M980.5 562.9L970.2 591.1M967.9 578.3L985.5 584.7M986.6 565.2L976.4 593.4M966.2 585.7L982.1 591.5M991.2 566.8L981.0 595.0" stroke="#cdd5e2" stroke-width=".6" fill="none"/>
<path d="M1016.3 590.7L1050.5 599.9M1024.3 588.4L1015.3 622.2M1011.9 598.6L1050.3 608.9M1031.0 590.1L1021.9 623.9M1016.9 609.0L1040.9 615.4M1037.9 592.0L1028.9 625.8M1016.6 618.0L1036.6 623.4M1044.8 593.9L1035.8 627.7" stroke="#cdd5e2" stroke-width=".6" fill="none"/>
<path d="M200.0 373.0 L709.7 373.0 L698.5 387.5 L691.0 398.7 L682.0 412.5 L670.0 442.5 L659.0 470.0 L649.0 495.0 L639.0 520.0 L625.5 555.0 L621.0 567.5 L604.8 605.0 L600.3 614.6 L565.4 615.4 L565.4 629.7 L585.2 629.7 L585.2 623.3 L596.3 623.3 L596.3 642.4 L587.6 643.2 L574.1 641.6 L568.6 651.1 L568.6 653.5 L582.9 653.5 L582.9 659.8 L578.0 672.5 L571.7 685.2 L559.0 699.5 L559.0 700.0 L200.0 700.0Z" fill="#8fd9ed"/>
<rect x="329" y="373" width="1" height="327" fill="#a3e0f0" opacity=".7"/><rect x="533" y="373" width="1" height="327" fill="#a3e0f0" opacity=".5"/>
<path d="M492 431 L562 621" fill="none" stroke="#79c6de" stroke-width="1" stroke-dasharray="4 2"/>
<path d="M200 566 L420 598 L540 613 L558 618 L562 621 L562 650" fill="none" stroke="#79c6de" stroke-width="1" stroke-dasharray="4 2"/>
<text transform="translate(462.6 374.2) rotate(64.8)" font-size="7.8" fill="#4a9bbb" textLength="61.5" lengthAdjust="spacingAndGlyphs">d, CY - Ashdod, IL</text>
<path d="M556.0 623.0 C555.2 625.8 552.3 633.8 551.0 640.0 C549.7 646.2 547.8 653.3 548.0 660.0 C548.2 666.7 550.0 674.3 552.0 680.0 C554.0 685.7 558.7 691.7 560.0 694.0" fill="none" stroke="#d8eef5" stroke-width="1.5"/>
<path d="M563.0 624.0 C562.8 628.3 561.7 642.7 562.0 650.0 C562.3 657.3 564.5 665.0 565.0 668.0" fill="none" stroke="#bfe6f2" stroke-width="1"/>
<path d="M561.4 664.6 L577.3 672.5" stroke="#f0f2f2" stroke-width="2.6" fill="none"/>
<path d="M560.6 672.5 L571.7 679.7" stroke="#f0f2f2" stroke-width="2.6" fill="none"/>
<path d="M559.8 678.9 L568.6 683.7" stroke="#f0f2f2" stroke-width="2.6" fill="none"/>
<path d="M558.3 686 L565.4 690.8" stroke="#f0f2f2" stroke-width="2.6" fill="none"/>
<path d="M1186.0 432.0 C1188.1 428.8 1190.8 430.8 1194.0 434.0 C1197.2 437.2 1198.5 439.5 1198.0 444.0 C1197.5 448.5 1195.2 450.5 1192.0 451.0 C1188.8 451.5 1187.6 451.1 1186.0 446.0 C1184.4 440.9 1183.9 435.2 1186.0 432.0Z" fill="#8fd9ed"/>
<path d="M1110.0 492.0 C1111.3 489.3 1114.1 490.3 1116.0 493.0 C1117.9 495.7 1118.3 499.3 1117.0 502.0 C1115.7 504.7 1112.9 505.7 1111.0 503.0 C1109.1 500.3 1108.7 494.7 1110.0 492.0Z" fill="#8fd9ed"/>
<path d="M726.5 627.3 L734.4 617 L738.4 618.6 L729.7 629.7Z" fill="#8fd9ed"/>
<path d="M864.0 586.0 C867.2 583.6 874.8 584.4 878.0 586.0 C881.2 587.6 877.6 589.1 876.0 592.0 C874.4 594.9 874.7 596.2 872.0 597.0 C869.3 597.8 868.1 597.9 866.0 595.0 C863.9 592.1 860.8 588.4 864.0 586.0Z" fill="#8fd9ed"/>
<path d="M816.0 441.5 C817.6 440.6 821.6 441.4 824.0 442.5 C826.4 443.6 826.6 444.6 825.0 445.5 C823.4 446.4 820.4 447.1 818.0 446.0 C815.6 444.9 814.4 442.4 816.0 441.5Z" fill="#8fd9ed"/>
<path d="M1046.0 690.0 C1047.9 687.1 1051.3 686.1 1054.0 688.0 C1056.7 689.9 1057.9 694.1 1056.0 697.0 C1054.1 699.9 1049.7 700.9 1047.0 699.0 C1044.3 697.1 1044.1 692.9 1046.0 690.0Z" fill="#8fd9ed"/>
<path d="M1097.0 690.0 C1099.4 686.8 1103.2 685.5 1108.0 686.0 C1112.8 686.5 1114.5 688.5 1115.0 692.0 C1115.5 695.5 1114.3 697.4 1110.0 699.0 C1105.7 700.6 1102.5 700.4 1099.0 698.0 C1095.5 695.6 1094.6 693.2 1097.0 690.0Z" fill="#8fd9ed"/>
<path d="M1332.0 626.0 C1333.6 623.3 1338.5 621.9 1342.0 623.0 C1345.5 624.1 1346.6 627.3 1345.0 630.0 C1343.4 632.7 1339.5 634.1 1336.0 633.0 C1332.5 631.9 1330.4 628.7 1332.0 626.0Z" fill="#8fd9ed"/>
<circle cx="696" cy="584.5" r="1.2" fill="#8fd9ed"/><circle cx="750" cy="480" r="1.5" fill="#8fd9ed"/><circle cx="901" cy="567" r="1.8" fill="#8fd9ed"/><circle cx="1170" cy="577" r="1" fill="#8fd9ed"/>
<path d="M892.0 535.0 C898.3 536.7 919.6 541.2 930.0 545.0 C940.4 548.8 948.3 551.7 954.5 557.5 C960.7 563.3 960.8 572.5 967.0 580.0 C973.2 587.5 983.7 596.7 992.0 602.5 C1000.3 608.3 1010.3 610.4 1017.0 615.0 C1023.7 619.6 1025.3 625.8 1032.0 630.0 C1038.7 634.2 1047.8 637.9 1057.0 640.0 C1066.2 642.1 1078.7 639.2 1087.0 642.5 C1095.3 645.8 1097.8 653.3 1107.0 660.0 C1116.2 666.7 1133.2 675.8 1142.0 682.5 C1150.8 689.2 1157.0 697.1 1160.0 700.0" fill="none" stroke="#c2ccdc" stroke-width="1.91" stroke-linecap="round" stroke-linejoin="round"/>
<path d="M1160.0 452.5 C1165.0 455.4 1180.8 462.9 1190.0 470.0 C1199.2 477.1 1206.7 488.3 1215.0 495.0 C1223.3 501.7 1232.5 503.3 1240.0 510.0 C1247.5 516.7 1253.8 527.5 1260.0 535.0 C1266.2 542.5 1270.5 547.0 1277.5 555.0 C1284.5 563.0 1293.6 571.0 1302.0 583.0 C1310.4 595.0 1319.8 615.0 1328.0 627.0 C1336.2 639.0 1347.2 650.3 1351.0 655.0" fill="none" stroke="#c2ccdc" stroke-width="1.74" stroke-linecap="round" stroke-linejoin="round"/>
<path d="M858.0 480.0 C860.8 483.3 868.8 493.3 875.0 500.0 C881.2 506.7 888.3 513.3 895.0 520.0 C901.7 526.7 907.5 534.7 915.0 540.0 C922.5 545.3 935.8 550.0 940.0 552.0" fill="none" stroke="#c2ccdc" stroke-width="1.74" stroke-linecap="round" stroke-linejoin="round"/>
<path d="M892.0 500.0 C898.3 497.5 918.7 490.0 930.0 485.0 C941.3 480.0 950.0 475.0 960.0 470.0 C970.0 465.0 985.0 457.5 990.0 455.0" fill="none" stroke="#c2ccdc" stroke-width="1.39" stroke-linecap="round" stroke-linejoin="round"/>
<path d="M927.0 373.0 C927.5 377.5 927.8 390.5 930.0 400.0 C932.2 409.5 935.8 418.3 940.0 430.0 C944.2 441.7 950.8 456.7 955.0 470.0 C959.2 483.3 962.2 496.7 965.0 510.0 C967.8 523.3 970.8 543.3 972.0 550.0" fill="none" stroke="#c2ccdc" stroke-width="1.57" stroke-linecap="round" stroke-linejoin="round"/>
<path d="M601.0 669.4 C605.7 669.4 621.7 669.1 629.0 669.4 C636.3 669.7 638.5 671.3 644.8 671.0 C651.1 670.7 661.2 669.3 667.0 667.8 C672.8 666.3 676.0 662.5 679.7 662.2 C683.4 661.9 686.3 664.5 689.2 666.2 C692.1 667.9 695.8 671.5 697.1 672.5" fill="none" stroke="#9badcc" stroke-width="2.26" stroke-linecap="round" stroke-linejoin="round"/>
<path d="M628.9 700.0 C629.1 696.7 629.6 685.9 630.0 680.0 C630.4 674.1 630.4 668.2 631.3 664.6 C632.2 661.0 630.3 659.3 635.2 658.3 C640.1 657.2 656.1 657.5 660.6 658.3 C665.1 659.1 661.1 661.4 662.2 663.0 C663.3 664.6 666.2 667.0 667.0 667.8" fill="none" stroke="#9badcc" stroke-width="1.57" stroke-linecap="round" stroke-linejoin="round"/>
<path d="M721.0 686.0 C728.5 686.0 756.8 684.5 766.0 686.0 C775.2 687.5 772.8 692.7 776.0 695.0 C779.2 697.3 783.5 699.2 785.0 700.0" fill="none" stroke="#9badcc" stroke-width="2.26" stroke-linecap="round" stroke-linejoin="round"/>
<path d="M721.0 392.0 L741.0 395.0" fill="none" stroke="#d5dbe3" stroke-width=".8"/>
<path d="M690.0 498.0 C701.7 499.2 745.8 502.7 760.0 505.0 C774.2 507.3 772.5 510.8 775.0 512.0" fill="none" stroke="#d5dbe3" stroke-width=".8"/>
<path d="M719.4 608.3 C717.3 608.3 711.5 605.5 706.7 608.3 C701.9 611.1 695.2 623.3 690.8 624.9 C686.4 626.5 685.5 619.0 680.5 617.8 C675.5 616.6 663.9 611.1 660.6 617.8 C657.3 624.5 660.6 651.3 660.6 658.0" fill="none" stroke="#d5dbe3" stroke-width=".8"/>
<path d="M780.0 600.0 C779.8 606.7 778.7 626.7 779.0 640.0 C779.3 653.3 781.5 673.3 782.0 680.0" fill="none" stroke="#d5dbe3" stroke-width=".8"/>
<path d="M1040.0 640.0 C1043.3 633.3 1053.3 613.3 1060.0 600.0 C1066.7 586.7 1073.3 573.3 1080.0 560.0 C1086.7 546.7 1096.7 526.7 1100.0 520.0" fill="none" stroke="#d5dbe3" stroke-width=".8"/>
<path d="M1000.0 700.0 C1001.7 693.3 1004.2 670.0 1010.0 660.0 C1015.8 650.0 1030.8 643.3 1035.0 640.0" fill="none" stroke="#d5dbe3" stroke-width=".8"/>
<path d="M1250.0 600.0 C1246.7 603.3 1238.3 613.3 1230.0 620.0 C1221.7 626.7 1205.0 636.7 1200.0 640.0" fill="none" stroke="#d5dbe3" stroke-width=".8"/>
<path d="M1180.0 560.0 C1183.3 563.3 1194.2 573.3 1200.0 580.0 C1205.8 586.7 1212.5 596.7 1215.0 600.0" fill="none" stroke="#d5dbe3" stroke-width=".8"/>
<path d="M721 634.4 L656.7 636.8 L629 660" fill="none" stroke="#d5dbe3" stroke-width=".8"/>
<path d="M1308.0 573.2 C1306.9 575.4 1302.2 580.8 1301.3 586.5 C1300.3 592.2 1301.7 599.8 1302.3 607.3 C1302.9 614.8 1303.0 625.5 1305.1 631.8 C1307.1 638.1 1312.4 641.5 1314.6 645.0 C1316.8 648.5 1317.8 651.3 1318.4 652.6" fill="none" stroke="#a9deef" stroke-width=".9"/>
<path d="M883.5 373.0 C881.0 377.1 871.8 390.5 868.5 397.5 C865.2 404.5 865.6 407.9 863.5 415.0 C861.4 422.1 859.8 429.2 856.0 440.0 C852.2 450.8 846.0 468.3 841.0 480.0 C836.0 491.7 830.3 501.2 826.0 510.0 C821.7 518.8 817.9 525.0 815.0 532.5 C812.1 540.0 811.7 547.1 808.5 555.0 C805.3 562.9 801.4 572.9 796.0 580.0 C790.6 587.1 782.7 591.2 776.0 597.5 C769.3 603.8 762.7 610.4 756.0 617.5 C749.3 624.6 741.8 632.9 736.0 640.0 C730.2 647.1 726.0 653.3 721.0 660.0 C716.0 666.7 709.3 673.3 706.0 680.0 C702.7 686.7 701.8 696.7 701.0 700.0" fill="none" stroke="#9badcc" stroke-width="2.44" stroke-linecap="round" stroke-linejoin="round"/>
<path d="M892.0 498.0 C890.2 499.2 886.6 501.3 881.0 505.0 C875.4 508.7 865.2 514.2 858.5 520.0 C851.8 525.8 846.8 534.2 841.0 540.0 C835.2 545.8 828.9 551.7 823.5 555.0 C818.1 558.3 811.0 559.2 808.5 560.0" fill="none" stroke="#9badcc" stroke-width="2.09" stroke-linecap="round" stroke-linejoin="round"/>
<path d="M1149.5 373.0 C1148.2 375.8 1146.2 383.7 1142.0 390.0 C1137.8 396.3 1131.6 406.4 1124.5 411.0 C1117.4 415.6 1107.4 414.8 1099.5 417.5 C1091.6 420.2 1084.5 422.9 1077.0 427.5 C1069.5 432.1 1062.0 437.1 1054.5 445.0 C1047.0 452.9 1039.1 464.2 1032.0 475.0 C1024.9 485.8 1017.8 500.8 1012.0 510.0 C1006.2 519.2 1002.8 522.5 997.0 530.0 C991.2 537.5 984.1 547.1 977.0 555.0 C969.9 562.9 963.2 569.2 954.5 577.5 C945.8 585.8 932.4 597.1 924.5 605.0 C916.6 612.9 912.4 617.5 907.0 625.0 C901.6 632.5 897.2 640.8 892.0 650.0 C886.8 659.2 879.9 671.7 876.0 680.0 C872.1 688.3 869.8 696.7 868.5 700.0" fill="none" stroke="#9badcc" stroke-width="2.52" stroke-linecap="round" stroke-linejoin="round"/>
<path d="M1100.0 373.0 C1102.5 377.1 1110.4 391.8 1115.0 397.5 C1119.6 403.2 1124.2 403.8 1127.5 407.5 C1130.8 411.2 1131.2 414.6 1135.0 420.0 C1138.8 425.4 1147.5 436.7 1150.0 440.0" fill="none" stroke="#9badcc" stroke-width="2.26" stroke-linecap="round" stroke-linejoin="round"/>
<path d="M1040.0 465.0 C1042.5 461.7 1048.8 451.9 1055.0 445.0 C1061.2 438.1 1069.6 428.3 1077.5 423.8 C1085.4 419.2 1094.1 420.1 1102.5 417.5 C1110.9 414.9 1123.8 409.6 1128.0 408.0" fill="none" stroke="#9badcc" stroke-width="2.09" stroke-linecap="round" stroke-linejoin="round"/>
<path d="M1134.5 465.0 C1134.7 468.8 1134.1 480.0 1135.8 487.5 C1137.4 495.0 1142.6 502.9 1144.5 510.0 C1146.4 517.1 1146.8 523.3 1147.0 530.0 C1147.2 536.7 1146.0 545.0 1146.0 550.0 C1146.0 555.0 1144.3 552.9 1147.0 560.0 C1149.7 567.1 1156.6 580.8 1162.0 592.5 C1167.4 604.2 1174.9 620.4 1179.5 630.0 C1184.1 639.6 1187.4 640.0 1189.5 650.0 C1191.6 660.0 1191.4 681.7 1192.0 690.0 C1192.6 698.3 1192.8 698.3 1193.0 700.0" fill="none" stroke="#9badcc" stroke-width="2.09" stroke-linecap="round" stroke-linejoin="round"/>
<path d="M1160.0 442.5 C1163.3 440.4 1171.7 433.8 1180.0 430.0 C1188.3 426.2 1202.5 424.2 1210.0 420.0 C1217.5 415.8 1222.5 407.5 1225.0 405.0" fill="none" stroke="#94a5c8" stroke-width="2.78" stroke-linecap="round" stroke-linejoin="round"/>
<path d="M1210.0 694.0 C1214.2 691.4 1226.8 681.6 1235.5 678.4 C1244.2 675.2 1253.4 675.4 1262.0 675.0 C1270.6 674.6 1278.6 675.4 1287.0 676.0 C1295.4 676.6 1304.6 680.7 1312.6 678.4 C1320.6 676.1 1328.6 667.1 1335.0 662.0 C1341.4 656.9 1348.3 650.0 1351.0 647.6" fill="none" stroke="#9badcc" stroke-width="2.44" stroke-linecap="round" stroke-linejoin="round"/>
<path d="M796.0 373.0 C795.7 376.7 795.0 385.1 794.0 395.0 C793.0 404.9 791.3 422.5 790.0 432.5 C788.7 442.5 788.5 447.4 786.0 455.0 C783.5 462.6 779.6 468.8 775.0 478.0 C770.4 487.2 764.6 497.2 758.5 510.0 C752.4 522.8 743.5 543.3 738.5 555.0 C733.5 566.7 731.2 571.7 728.5 580.0 C725.8 588.3 722.8 596.7 722.0 605.0 C721.2 613.3 724.1 622.5 723.5 630.0 C722.9 637.5 721.4 644.2 718.5 650.0 C715.6 655.8 709.8 660.8 706.0 665.0 C702.2 669.2 697.9 669.2 696.0 675.0 C694.1 680.8 695.0 695.8 694.8 700.0" fill="none" stroke="#94a5c8" stroke-width="3.39" stroke-linecap="round" stroke-linejoin="round"/>
<path d="M796.0 373.0 C795.7 376.7 795.0 385.1 794.0 395.0 C793.0 404.9 791.3 422.5 790.0 432.5 C788.7 442.5 788.5 447.4 786.0 455.0 C783.5 462.6 779.6 468.8 775.0 478.0 C770.4 487.2 764.6 497.2 758.5 510.0 C752.4 522.8 743.5 543.3 738.5 555.0 C733.5 566.7 731.2 571.7 728.5 580.0 C725.8 588.3 722.8 596.7 722.0 605.0 C721.2 613.3 724.1 622.5 723.5 630.0 C722.9 637.5 721.4 644.2 718.5 650.0 C715.6 655.8 709.8 660.8 706.0 665.0 C702.2 669.2 697.9 669.2 696.0 675.0 C694.1 680.8 695.0 695.8 694.8 700.0" fill="none" stroke="#bac5dc" stroke-width="0.70" stroke-linecap="round" stroke-linejoin="round"/>
<path d="M968.0 373.0 C969.1 375.0 969.7 380.5 974.5 385.0 C979.3 389.5 989.5 395.2 997.0 400.0 C1004.5 404.8 1011.2 410.4 1019.5 413.8 C1027.8 417.1 1037.4 417.7 1047.0 420.0 C1056.6 422.3 1067.8 424.2 1077.0 427.5 C1086.2 430.8 1094.5 437.2 1102.0 440.0 C1109.5 442.8 1114.1 443.8 1122.0 444.5 C1129.9 445.2 1142.0 443.8 1149.5 444.0 C1157.0 444.2 1159.9 443.8 1167.0 446.0 C1174.1 448.2 1184.0 454.3 1192.0 457.5 C1200.0 460.7 1204.9 462.9 1215.0 465.0 C1225.1 467.1 1242.1 467.1 1252.5 470.0 C1262.9 472.9 1269.2 479.0 1277.5 482.5 C1285.8 486.0 1294.2 489.4 1302.5 491.2 C1310.8 493.1 1319.4 494.0 1327.5 493.8 C1335.6 493.5 1347.1 490.6 1351.0 490.0" fill="none" stroke="#94a5c8" stroke-width="3.39" stroke-linecap="round" stroke-linejoin="round"/>
<path d="M968.0 373.0 C969.1 375.0 969.7 380.5 974.5 385.0 C979.3 389.5 989.5 395.2 997.0 400.0 C1004.5 404.8 1011.2 410.4 1019.5 413.8 C1027.8 417.1 1037.4 417.7 1047.0 420.0 C1056.6 422.3 1067.8 424.2 1077.0 427.5 C1086.2 430.8 1094.5 437.2 1102.0 440.0 C1109.5 442.8 1114.1 443.8 1122.0 444.5 C1129.9 445.2 1142.0 443.8 1149.5 444.0 C1157.0 444.2 1159.9 443.8 1167.0 446.0 C1174.1 448.2 1184.0 454.3 1192.0 457.5 C1200.0 460.7 1204.9 462.9 1215.0 465.0 C1225.1 467.1 1242.1 467.1 1252.5 470.0 C1262.9 472.9 1269.2 479.0 1277.5 482.5 C1285.8 486.0 1294.2 489.4 1302.5 491.2 C1310.8 493.1 1319.4 494.0 1327.5 493.8 C1335.6 493.5 1347.1 490.6 1351.0 490.0" fill="none" stroke="#bac5dc" stroke-width="0.70" stroke-linecap="round" stroke-linejoin="round"/>
<path d="M1231.2 373.0 C1230.4 377.9 1225.2 392.6 1226.2 402.5 C1227.3 412.4 1234.0 424.2 1237.5 432.5 C1241.0 440.8 1245.0 446.2 1247.5 452.5 C1250.0 458.8 1250.8 464.2 1252.5 470.0 C1254.2 475.8 1253.3 479.6 1257.5 487.5 C1261.7 495.4 1270.4 508.3 1277.5 517.5 C1284.6 526.7 1293.8 536.2 1300.0 542.5 C1306.2 548.8 1308.7 551.2 1315.0 555.0 C1321.3 558.8 1332.0 561.6 1338.0 565.4 C1344.0 569.2 1348.8 575.9 1351.0 578.0" fill="none" stroke="#94a5c8" stroke-width="3.13" stroke-linecap="round" stroke-linejoin="round"/>
<path d="M1231.2 373.0 C1230.4 377.9 1225.2 392.6 1226.2 402.5 C1227.3 412.4 1234.0 424.2 1237.5 432.5 C1241.0 440.8 1245.0 446.2 1247.5 452.5 C1250.0 458.8 1250.8 464.2 1252.5 470.0 C1254.2 475.8 1253.3 479.6 1257.5 487.5 C1261.7 495.4 1270.4 508.3 1277.5 517.5 C1284.6 526.7 1293.8 536.2 1300.0 542.5 C1306.2 548.8 1308.7 551.2 1315.0 555.0 C1321.3 558.8 1332.0 561.6 1338.0 565.4 C1344.0 569.2 1348.8 575.9 1351.0 578.0" fill="none" stroke="#bac5dc" stroke-width="0.70" stroke-linecap="round" stroke-linejoin="round"/>
<path d="M1149.5 445.0 C1147.4 447.5 1140.8 454.6 1137.0 460.0 C1133.2 465.4 1129.5 470.4 1127.0 477.5 C1124.5 484.6 1124.1 494.6 1122.0 502.5 C1119.9 510.4 1116.8 517.1 1114.5 525.0 C1112.2 532.9 1109.7 542.1 1108.0 550.0 C1106.3 557.9 1105.9 565.0 1104.5 572.5 C1103.1 580.0 1102.8 587.1 1099.5 595.0 C1096.2 602.9 1089.9 611.2 1084.5 620.0 C1079.1 628.8 1073.2 637.9 1067.0 647.5 C1060.8 657.1 1053.2 668.8 1047.0 677.5 C1040.8 686.2 1032.4 696.2 1029.5 700.0" fill="none" stroke="#94a5c8" stroke-width="3.39" stroke-linecap="round" stroke-linejoin="round"/>
<path d="M1149.5 445.0 C1147.4 447.5 1140.8 454.6 1137.0 460.0 C1133.2 465.4 1129.5 470.4 1127.0 477.5 C1124.5 484.6 1124.1 494.6 1122.0 502.5 C1119.9 510.4 1116.8 517.1 1114.5 525.0 C1112.2 532.9 1109.7 542.1 1108.0 550.0 C1106.3 557.9 1105.9 565.0 1104.5 572.5 C1103.1 580.0 1102.8 587.1 1099.5 595.0 C1096.2 602.9 1089.9 611.2 1084.5 620.0 C1079.1 628.8 1073.2 637.9 1067.0 647.5 C1060.8 657.1 1053.2 668.8 1047.0 677.5 C1040.8 686.2 1032.4 696.2 1029.5 700.0" fill="none" stroke="#bac5dc" stroke-width="0.70" stroke-linecap="round" stroke-linejoin="round"/>
<ellipse cx="722.3" cy="606" rx="3" ry="5.5" fill="#94a5c8"/>
<path d="M1140 438 L1162 438 L1168 448 L1145 452Z" fill="#94a5c8"/>
<path d="M681.0 662.5 C682.5 663.4 687.8 665.1 690.0 668.0 C692.2 670.9 693.3 674.7 694.0 680.0 C694.7 685.3 694.0 696.7 694.0 700.0" fill="none" stroke="#9badcc" stroke-width="1.39" stroke-linecap="round" stroke-linejoin="round"/>
<path d="M712.0 655.0 C710.7 657.2 706.2 663.2 704.0 668.0 C701.8 672.8 700.0 678.7 699.0 684.0 C698.0 689.3 698.2 697.3 698.0 700.0" fill="none" stroke="#9badcc" stroke-width="1.39" stroke-linecap="round" stroke-linejoin="round"/>
<path d="M706.0 665.0 C705.0 666.8 700.7 670.2 700.0 676.0 C699.3 681.8 701.7 696.0 702.0 700.0" fill="none" stroke="#9badcc" stroke-width="1.22" stroke-linecap="round" stroke-linejoin="round"/>
<path d="M1351.0 565.4 C1346.7 566.3 1333.1 568.9 1325.0 571.0 C1316.9 573.1 1307.4 575.0 1302.3 578.3 C1297.2 581.6 1295.0 582.9 1294.6 591.0 C1294.2 599.1 1297.8 615.4 1299.7 627.0 C1301.6 638.6 1303.8 652.3 1306.0 660.5 C1308.2 668.7 1310.3 671.8 1312.6 676.0 C1314.9 680.2 1317.4 682.0 1320.0 686.0 C1322.6 690.0 1326.7 697.7 1328.0 700.0" fill="none" stroke="#555" stroke-width="1.3" stroke-dasharray="4.5 3"/>
<g opacity="1"><rect x="762.4" y="371.1" width="19.8" height="10.4" rx="2" fill="#fff" stroke="#8b2f3c" stroke-width="1.2"/><text x="772.2" y="378.9" text-anchor="middle" font-size="7.5" font-weight="bold" fill="#8b2f3c">4311</text></g>
<g opacity="1"><rect x="918.6" y="402.8" width="16.8" height="10.4" rx="2" fill="#fff" stroke="#3f8a32" stroke-width="1.2"/><text x="927.0" y="410.7" text-anchor="middle" font-size="7.5" font-weight="bold" fill="#3f8a32">412</text></g>
<g opacity="1"><rect x="850.1" y="477.8" width="16.8" height="10.4" rx="2" fill="#fff" stroke="#3f8a32" stroke-width="1.2"/><text x="858.5" y="485.7" text-anchor="middle" font-size="7.5" font-weight="bold" fill="#3f8a32">411</text></g>
<g opacity="1"><rect x="840.9" y="527.8" width="16.8" height="10.4" rx="2" fill="#fff" stroke="#3f8a32" stroke-width="1.2"/><text x="849.2" y="535.7" text-anchor="middle" font-size="7.5" font-weight="bold" fill="#3f8a32">410</text></g>
<g opacity="1"><rect x="760.2" y="496.8" width="14" height="10.4" rx="2" fill="#e9e3dc" stroke="#7c89a6" stroke-width="1.2"/><text x="767.2" y="504.7" text-anchor="middle" font-size="7.5" font-weight="bold" fill="#7c89a6">4</text></g>
<g opacity="1"><rect x="785.6" y="516.5" width="19.8" height="10.4" rx="2" fill="#fff" stroke="#8b2f3c" stroke-width="1.2"/><text x="795.5" y="524.5" text-anchor="middle" font-size="7.5" font-weight="bold" fill="#8b2f3c">4111</text></g>
<g opacity="1"><rect x="806.0" y="536.0" width="15" height="10.4" rx="2" fill="#fff" stroke="#cc2f3d" stroke-width="1.2"/><text x="813.5" y="544.0" text-anchor="middle" font-size="7.5" font-weight="bold" fill="#cc2f3d">42</text></g>
<g opacity="1"><rect x="938.1" y="546.3" width="16.8" height="10.4" rx="2" fill="#fff" stroke="#3f8a32" stroke-width="1.2"/><text x="946.5" y="554.2" text-anchor="middle" font-size="7.5" font-weight="bold" fill="#3f8a32">411</text></g>
<g opacity="1"><rect x="1056.3" y="486.8" width="19.8" height="10.4" rx="2" fill="#fff" stroke="#8b2f3c" stroke-width="1.2"/><text x="1066.2" y="494.7" text-anchor="middle" font-size="7.5" font-weight="bold" fill="#8b2f3c">4304</text></g>
<g opacity="1"><rect x="1020.4" y="519.3" width="19.8" height="10.4" rx="2" fill="#fff" stroke="#8b2f3c" stroke-width="1.2"/><text x="1030.2" y="527.2" text-anchor="middle" font-size="7.5" font-weight="bold" fill="#8b2f3c">4233</text></g>
<g opacity="1"><rect x="1060.1" y="536.5" width="19.8" height="10.4" rx="2" fill="#fff" stroke="#8b2f3c" stroke-width="1.2"/><text x="1070.0" y="544.5" text-anchor="middle" font-size="7.5" font-weight="bold" fill="#8b2f3c">4233</text></g>
<g opacity="1"><rect x="1133.1" y="495.6" width="15" height="10.4" rx="2" fill="#fff" stroke="#cc2f3d" stroke-width="1.2"/><text x="1140.6" y="503.4" text-anchor="middle" font-size="7.5" font-weight="bold" fill="#cc2f3d">44</text></g>
<g opacity="1"><rect x="1141.3" y="438.3" width="16.8" height="10.4" rx="2" fill="#fff" stroke="#2f60ad" stroke-width="1.2"/><text x="1149.8" y="446.2" text-anchor="middle" font-size="7.5" font-weight="bold" fill="#2f60ad">431</text></g>
<g opacity="1"><rect x="1220.5" y="391.3" width="14" height="10.4" rx="2" fill="#fff" stroke="#2f60ad" stroke-width="1.2"/><text x="1227.5" y="399.2" text-anchor="middle" font-size="7.5" font-weight="bold" fill="#2f60ad">6</text></g>
<g opacity="1"><rect x="1245.5" y="464.3" width="14" height="10.4" rx="2" fill="#fff" stroke="#2f60ad" stroke-width="1.2"/><text x="1252.5" y="472.2" text-anchor="middle" font-size="7.5" font-weight="bold" fill="#2f60ad">1</text></g>
<g opacity="1"><rect x="1300.5" y="543.8" width="14" height="10.4" rx="2" fill="#fff" stroke="#2f60ad" stroke-width="1.2"/><text x="1307.5" y="551.7" text-anchor="middle" font-size="7.5" font-weight="bold" fill="#2f60ad">1</text></g>
<g opacity="1"><rect x="1349.0" y="485.3" width="14" height="10.4" rx="2" fill="#fff" stroke="#2f60ad" stroke-width="1.2"/><text x="1356.0" y="493.2" text-anchor="middle" font-size="7.5" font-weight="bold" fill="#2f60ad">1</text></g>
<g opacity="1"><rect x="1243.6" y="523.3" width="16.8" height="10.4" rx="2" fill="#fff" stroke="#3f8a32" stroke-width="1.2"/><text x="1252.0" y="531.2" text-anchor="middle" font-size="7.5" font-weight="bold" fill="#3f8a32">424</text></g>
<g opacity="1"><rect x="1316.3" y="529.8" width="19.8" height="10.4" rx="2" fill="#fff" stroke="#8b2f3c" stroke-width="1.2"/><text x="1326.2" y="537.7" text-anchor="middle" font-size="7.5" font-weight="bold" fill="#8b2f3c">4249</text></g>
<g opacity="1"><rect x="769.9" y="623.0" width="19.8" height="10.4" rx="2" fill="#fff" stroke="#8b2f3c" stroke-width="1.2"/><text x="779.8" y="631.0" text-anchor="middle" font-size="7.5" font-weight="bold" fill="#8b2f3c">4102</text></g>
<g opacity="1"><rect x="706.5" y="677.8" width="15" height="10.4" rx="2" fill="#fff" stroke="#cc2f3d" stroke-width="1.2"/><text x="714.0" y="685.7" text-anchor="middle" font-size="7.5" font-weight="bold" fill="#cc2f3d">42</text></g>
<g opacity="1"><rect x="751.5" y="679.3" width="14" height="10.4" rx="2" fill="#fff" stroke="#2f60ad" stroke-width="1.2"/><text x="758.5" y="687.2" text-anchor="middle" font-size="7.5" font-weight="bold" fill="#2f60ad">7</text></g>
<g opacity="1"><rect x="881.5" y="655.2" width="15" height="10.4" rx="2" fill="#fff" stroke="#cc2f3d" stroke-width="1.2"/><text x="889.0" y="663.1" text-anchor="middle" font-size="7.5" font-weight="bold" fill="#cc2f3d">40</text></g>
<g opacity="1"><rect x="905.9" y="653.4" width="19.8" height="10.4" rx="2" fill="#fff" stroke="#8b2f3c" stroke-width="1.2"/><text x="915.8" y="661.3" text-anchor="middle" font-size="7.5" font-weight="bold" fill="#8b2f3c">4103</text></g>
<g opacity="1"><rect x="1153.5" y="589.8" width="15" height="10.4" rx="2" fill="#fff" stroke="#cc2f3d" stroke-width="1.2"/><text x="1161.0" y="597.7" text-anchor="middle" font-size="7.5" font-weight="bold" fill="#cc2f3d">44</text></g>
<g opacity="1"><rect x="1300.4" y="669.4" width="14" height="10.4" rx="2" fill="#fff" stroke="#cc2f3d" stroke-width="1.2"/><text x="1307.4" y="677.3" text-anchor="middle" font-size="7.5" font-weight="bold" fill="#cc2f3d">3</text></g>
<g opacity="1"><rect x="1146.1" y="692.3" width="16.8" height="10.4" rx="2" fill="#fff" stroke="#3f8a32" stroke-width="1.2"/><text x="1154.5" y="700.2" text-anchor="middle" font-size="7.5" font-weight="bold" fill="#3f8a32">411</text></g>
<g opacity="1"><rect x="1304.6" y="601.8" width="16.8" height="10.4" rx="2" fill="#fff" stroke="#3f8a32" stroke-width="1.2"/><text x="1313.0" y="609.7" text-anchor="middle" font-size="7.5" font-weight="bold" fill="#3f8a32">444</text></g>
<text x="697.5" y="386.9" font-size="10.5" font-weight="normal" fill="#3c3c3c" stroke="#fff" stroke-width="2.2" stroke-opacity=".85" paint-order="stroke" stroke-linejoin="round" textLength="34.8" lengthAdjust="spacingAndGlyphs" direction="rtl" unicode-bidi="bidi-override" text-anchor="end" >פלמחים</text>
<text x="864.9" y="398.3" font-size="10.5" font-weight="normal" fill="#3c3c3c" stroke="#fff" stroke-width="2.2" stroke-opacity=".85" paint-order="stroke" stroke-linejoin="round" textLength="25.0" lengthAdjust="spacingAndGlyphs" direction="rtl" unicode-bidi="bidi-override" text-anchor="end" >אירוס</text>
<text x="843.6" y="433.6" font-size="10.5" font-weight="normal" fill="#3c3c3c" stroke="#fff" stroke-width="2.2" stroke-opacity=".85" paint-order="stroke" stroke-linejoin="round" textLength="27.8" lengthAdjust="spacingAndGlyphs" direction="rtl" unicode-bidi="bidi-override" text-anchor="end" >עיינות</text>
<text x="917.0" y="389.4" font-size="10.5" font-weight="normal" fill="#3c3c3c" stroke="#fff" stroke-width="2.2" stroke-opacity=".85" paint-order="stroke" stroke-linejoin="round" textLength="36.2" lengthAdjust="spacingAndGlyphs" direction="rtl" unicode-bidi="bidi-override" text-anchor="end" >נס ציונה</text>
<text x="1090.2" y="390.1" font-size="10.5" font-weight="normal" fill="#3c3c3c" stroke="#fff" stroke-width="2.2" stroke-opacity=".85" paint-order="stroke" stroke-linejoin="round" textLength="23.2" lengthAdjust="spacingAndGlyphs" direction="rtl" unicode-bidi="bidi-override" text-anchor="end" >המלה</text>
<text x="1168.0" y="389.4" font-size="10.5" font-weight="normal" fill="#3c3c3c" stroke="#fff" stroke-width="2.2" stroke-opacity=".85" paint-order="stroke" stroke-linejoin="round" textLength="34.5" lengthAdjust="spacingAndGlyphs" direction="rtl" unicode-bidi="bidi-override" text-anchor="end" >אחיסמך</text>
<text x="1217.5" y="384.9" font-size="10.5" font-weight="normal" fill="#3c3c3c" stroke="#fff" stroke-width="2.2" stroke-opacity=".85" paint-order="stroke" stroke-linejoin="round" textLength="45.0" lengthAdjust="spacingAndGlyphs" direction="rtl" unicode-bidi="bidi-override" text-anchor="end" >כפר דניאל</text>
<text x="1252.5" y="402.4" font-size="10.5" font-weight="normal" fill="#3c3c3c" stroke="#fff" stroke-width="2.2" stroke-opacity=".85" paint-order="stroke" stroke-linejoin="round" textLength="17.5" lengthAdjust="spacingAndGlyphs" direction="rtl" unicode-bidi="bidi-override" text-anchor="end" >גמזו</text>
<text x="1084.5" y="459.4" font-size="10.5" font-weight="normal" fill="#3c3c3c" stroke="#fff" stroke-width="2.2" stroke-opacity=".85" paint-order="stroke" stroke-linejoin="round" textLength="27.2" lengthAdjust="spacingAndGlyphs" direction="rtl" unicode-bidi="bidi-override" text-anchor="end" >מצליח</text>
<text x="943.2" y="492.6" font-size="10.5" font-weight="normal" fill="#3c3c3c" stroke="#fff" stroke-width="2.2" stroke-opacity=".85" paint-order="stroke" stroke-linejoin="round" textLength="31.2" lengthAdjust="spacingAndGlyphs" direction="rtl" unicode-bidi="bidi-override" text-anchor="end" >רחובות</text>
<text x="789.8" y="511.9" font-size="10.5" font-weight="normal" fill="#3c3c3c" stroke="#fff" stroke-width="2.2" stroke-opacity=".85" paint-order="stroke" stroke-linejoin="round" textLength="45.0" lengthAdjust="spacingAndGlyphs" direction="rtl" unicode-bidi="bidi-override" text-anchor="end" >כפר הנגיד</text>
<text x="771.0" y="545.1" font-size="10.5" font-weight="normal" fill="#3c3c3c" stroke="#fff" stroke-width="2.2" stroke-opacity=".85" paint-order="stroke" stroke-linejoin="round" textLength="18.8" lengthAdjust="spacingAndGlyphs" direction="rtl" unicode-bidi="bidi-override" text-anchor="end" >יבנה</text>
<text x="1177.0" y="503.9" font-size="10.5" font-weight="normal" fill="#3c3c3c" stroke="#fff" stroke-width="2.2" stroke-opacity=".85" paint-order="stroke" stroke-linejoin="round" textLength="58.0" lengthAdjust="spacingAndGlyphs" direction="rtl" unicode-bidi="bidi-override" text-anchor="end" >בית חשמונאי</text>
<text x="972.5" y="558.1" font-size="10.5" font-weight="normal" fill="#3c3c3c" stroke="#fff" stroke-width="2.2" stroke-opacity=".85" paint-order="stroke" stroke-linejoin="round" textLength="43.2" lengthAdjust="spacingAndGlyphs" direction="rtl" unicode-bidi="bidi-override" text-anchor="end" >כפר ביל"ו</text>
<text x="958.2" y="579.9" font-size="10.5" font-weight="normal" fill="#3c3c3c" stroke="#fff" stroke-width="2.2" stroke-opacity=".85" paint-order="stroke" stroke-linejoin="round" textLength="50.0" lengthAdjust="spacingAndGlyphs" direction="rtl" unicode-bidi="bidi-override" text-anchor="end" >קרית עקרון</text>
<text x="997.5" y="613.1" font-size="10.5" font-weight="normal" fill="#3c3c3c" stroke="#fff" stroke-width="2.2" stroke-opacity=".85" paint-order="stroke" stroke-linejoin="round" textLength="55.0" lengthAdjust="spacingAndGlyphs" direction="rtl" unicode-bidi="bidi-override" text-anchor="end" >מזכרת בתיה</text>
<text x="908.2" y="626.4" font-size="10.5" font-weight="normal" fill="#3c3c3c" stroke="#fff" stroke-width="2.2" stroke-opacity=".85" paint-order="stroke" stroke-linejoin="round" textLength="50.0" lengthAdjust="spacingAndGlyphs" direction="rtl" unicode-bidi="bidi-override" text-anchor="end" >בית אלעזרי</text>
<text x="745.2" y="594.4" font-size="10.5" font-weight="normal" fill="#3c3c3c" stroke="#fff" stroke-width="2.2" stroke-opacity=".85" paint-order="stroke" stroke-linejoin="round" textLength="30.8" lengthAdjust="spacingAndGlyphs" direction="rtl" unicode-bidi="bidi-override" text-anchor="end" >רן זכאי</text>
<text x="796.0" y="683.1" font-size="10.5" font-weight="normal" fill="#3c3c3c" stroke="#fff" stroke-width="2.2" stroke-opacity=".85" paint-order="stroke" stroke-linejoin="round" textLength="26.2" lengthAdjust="spacingAndGlyphs" direction="rtl" unicode-bidi="bidi-override" text-anchor="end" >עשרת</text>
<text x="915.0" y="698.6" font-size="10.5" font-weight="normal" fill="#3c3c3c" stroke="#fff" stroke-width="2.2" stroke-opacity=".85" paint-order="stroke" stroke-linejoin="round" textLength="24.0" lengthAdjust="spacingAndGlyphs" direction="rtl" unicode-bidi="bidi-override" text-anchor="end" >קדרון</text>
<text x="1108.2" y="663.1" font-size="10.5" font-weight="normal" fill="#3c3c3c" stroke="#fff" stroke-width="2.2" stroke-opacity=".85" paint-order="stroke" stroke-linejoin="round" textLength="26.8" lengthAdjust="spacingAndGlyphs" direction="rtl" unicode-bidi="bidi-override" text-anchor="end" >חולדה</text>
<text x="1192.3" y="620.4" font-size="10.5" font-weight="normal" fill="#3c3c3c" stroke="#fff" stroke-width="2.2" stroke-opacity=".85" paint-order="stroke" stroke-linejoin="round" textLength="44.5" lengthAdjust="spacingAndGlyphs" direction="rtl" unicode-bidi="bidi-override" text-anchor="end" >כרמי יוסף</text>
<text x="1213.7" y="669.1" font-size="10.5" font-weight="normal" fill="#3c3c3c" stroke="#fff" stroke-width="2.2" stroke-opacity=".85" paint-order="stroke" stroke-linejoin="round" textLength="21.0" lengthAdjust="spacingAndGlyphs" direction="rtl" unicode-bidi="bidi-override" text-anchor="end" >בקע</text>
<text x="1284.3" y="665.6" font-size="10.5" font-weight="normal" fill="#3c3c3c" stroke="#fff" stroke-width="2.2" stroke-opacity=".85" paint-order="stroke" stroke-linejoin="round" textLength="23.6" lengthAdjust="spacingAndGlyphs" direction="rtl" unicode-bidi="bidi-override" text-anchor="end" >נחשון</text>
<text x="1341.5" y="661.1" font-size="10.5" font-weight="normal" fill="#3c3c3c" stroke="#fff" stroke-width="2.2" stroke-opacity=".85" paint-order="stroke" stroke-linejoin="round" textLength="9.5" lengthAdjust="spacingAndGlyphs" direction="rtl" unicode-bidi="bidi-override" text-anchor="end" >לט</text>
<text x="733.0" y="704.6" font-size="10.5" font-weight="normal" fill="#3c3c3c" stroke="#fff" stroke-width="2.2" stroke-opacity=".85" paint-order="stroke" stroke-linejoin="round" textLength="67.0" lengthAdjust="spacingAndGlyphs" direction="rtl" unicode-bidi="bidi-override" text-anchor="end" >גבעת וושינגטון</text>
<text x="959.5" y="465.4" font-size="7.2" font-weight="normal" fill="#6a6a6a" stroke="#fff" stroke-width="2.2" stroke-opacity=".85" paint-order="stroke" stroke-linejoin="round" textLength="45.5" lengthAdjust="spacingAndGlyphs" direction="rtl" unicode-bidi="bidi-override" text-anchor="end" letter-spacing=".5">רחובות המדע</text>
<text x="882.0" y="504.7" font-size="7.2" font-weight="normal" fill="#6a6a6a" stroke="#fff" stroke-width="2.2" stroke-opacity=".85" paint-order="stroke" stroke-linejoin="round" textLength="35.0" lengthAdjust="spacingAndGlyphs" direction="rtl" unicode-bidi="bidi-override" text-anchor="end" letter-spacing=".5">קרית משה</text>
<text transform="translate(1114 546) rotate(-79)" x="0" y="2.5" text-anchor="middle" font-size="7.6" fill="#55627a" stroke="#fff" stroke-width="1.6" stroke-opacity=".8" paint-order="stroke" textLength="54" lengthAdjust="spacingAndGlyphs">כביש יצחק רבין</text>
<circle cx="775" cy="536" r="58.3" fill="#ee2200" fill-opacity=".265"/>
<circle cx="775" cy="478" r="3.8" fill="#fff" stroke="#9a9a9a" stroke-width=".9"/>
<circle cx="716.8" cy="536" r="3.8" fill="#fff" stroke="#9a9a9a" stroke-width=".9"/>
<circle cx="833.4" cy="536" r="3.8" fill="#fff" stroke="#9a9a9a" stroke-width=".9"/>
<circle cx="775" cy="594.3" r="3.8" fill="#fff" stroke="#9a9a9a" stroke-width=".9"/>
<circle cx="775" cy="536" r="3.8" fill="#fff" stroke="#9a9a9a" stroke-width=".9"/>
<rect x="1164.6" y="689.8" width="37.6" height="11" fill="#f5f5f5" opacity=".72"/><rect x="1209.8" y="689.8" width="142" height="11" fill="#f5f5f5" opacity=".72"/>
<g opacity="0.35"><rect x="1316.8" y="686.1" width="19.8" height="10.4" rx="2" fill="#fff" stroke="#8b2f3c" stroke-width="1.2"/><text x="1326.7" y="694.0" text-anchor="middle" font-size="7.5" font-weight="bold" fill="#8b2f3c">4240</text></g>
<text x="1166.0" y="697.5" font-size="7.6" fill="#222" textLength="35.3" lengthAdjust="spacingAndGlyphs" direction="rtl" unicode-bidi="bidi-override" text-anchor="end">מקשי קיצור</text>
<text x="1211.4" y="697.5" font-size="7.6" fill="#222" textLength="23.0" lengthAdjust="spacingAndGlyphs" >2025©</text>
<text x="1236.8" y="697.5" font-size="7.6" fill="#222" textLength="30.2" lengthAdjust="spacingAndGlyphs" direction="rtl" unicode-bidi="bidi-override" text-anchor="end">נתוני מפה</text>
<text x="1270.5" y="697.5" font-size="7.6" fill="#222" textLength="46.0" lengthAdjust="spacingAndGlyphs" >Mapa GISrael</text>
<text x="1327.3" y="697.5" font-size="7.6" fill="#222" textLength="18.7" lengthAdjust="spacingAndGlyphs" direction="rtl" unicode-bidi="bidi-override" text-anchor="end">תנאים</text>
<text x="207.2" y="693.7" font-size="15.6" font-weight="normal" fill="#fff" stroke="#6f8d9b" stroke-width="1.7" paint-order="stroke" stroke-linejoin="round" textLength="46.4" lengthAdjust="spacingAndGlyphs" font-family="Liberation Sans,sans-serif">Google</text>
<rect x="1312" y="579.5" width="31" height="32" fill="#fff"/>
<g fill="none" stroke="#5f5f5f" stroke-width="1.3"><circle cx="1327.3" cy="594.3" r="4.1"/><path d="M1327.3 588 v2.4 M1327.3 598.2 v2.4 M1321 594.3 h2.4 M1331.2 594.3 h2.4"/></g><circle cx="1327.3" cy="594.3" r="1.7" fill="#5f5f5f"/>
<circle cx="1327.2" cy="665.6" r="15.6" fill="#000" opacity=".12"/><circle cx="1327.2" cy="665" r="15.5" fill="#fff"/>
<g fill="none" stroke="#666" stroke-width="1.7"><path d="M1324.2 659.7 l3 -3 l3 3"/><path d="M1324.2 670.5 l3 3 l3 -3"/><path d="M1321.5 662.1 l-3 3 l3 3"/><path d="M1332.9 662.1 l3 3 l-3 3"/></g>
<path d="M994 632.5 L994 647.3 L997.4 644.2 L999.8 649.8 L1002 648.8 L999.6 643.3 L1004 643 Z" fill="#111" stroke="#fff" stroke-width=".7"/>
</g></svg>
<!--ENDMAP-->
</div>
<!-- window corner -->
<div class="abs" style="left:0;top:727px;width:1px;height:13px;background:linear-gradient(to bottom,rgba(40,40,40,0),rgba(30,30,30,.9))"></div>
<div class="abs" style="left:1385px;top:730px;width:1px;height:10px;background:linear-gradient(to bottom,rgba(40,40,40,0),rgba(30,30,30,.9))"></div>
<div class="abs" style="left:1384px;top:0;width:2px;height:2px;background:#555;border-radius:0 0 0 2px"></div>
</body>
</html>
